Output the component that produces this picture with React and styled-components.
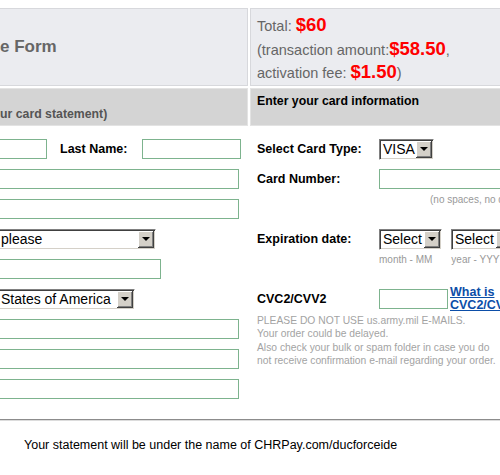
import React from "react";
import styled, { createGlobalStyle } from "styled-components";

const GlobalStyle = createGlobalStyle`
  html, body { margin: 0; padding: 0; background: #fff; overflow: hidden; }
  body { font-family: "Liberation Sans", Arial, sans-serif; }
  * { box-sizing: border-box; }
`;

const Page = styled.div`
  width: 560px;
  padding-top: 8px;
`;

const Grid = styled.div`
  display: grid;
  grid-template-columns: 248px 1fr;
  gap: 2px;
`;

const HeadCell = styled.div`
  height: 78px;
  background: #ebecf0;
  border: 1px solid #d7d8dc;
  border-left: ${(p) => (p.$cut ? "none" : "1px solid #d7d8dc")};
  display: flex;
  flex-direction: column;
  justify-content: ${(p) => (p.$top ? "flex-start" : "center")};
  padding: ${(p) => (p.$top ? "5px 6px" : "0")};
`;

const Title = styled.div`
  font-weight: bold;
  font-size: 17px;
  color: #666;
  line-height: 20px;
`;

const TotalLine = styled.div`
  font-size: 14.5px;
  color: #666;
  line-height: 21.5px;
  white-space: nowrap;
`;

const Amount = styled.span`
  color: #ff0000;
  font-weight: bold;
  font-size: 18.5px;
`;

const SubCell = styled.div`
  height: 38px;
  background: #d4d4d4;
  border: 1px solid #e3e3e3;
  border-left: ${(p) => (p.$cut ? "none" : "1px solid #e3e3e3")};
  display: flex;
  align-items: ${(p) => (p.$bottom ? "flex-end" : "flex-start")};
  padding: ${(p) => (p.$bottom ? "0 0 4px 0" : "5px 6px")};
  font-weight: bold;
  font-size: 12.3px;
  line-height: 14px;
  color: ${(p) => (p.$bottom ? "#555" : "#000")};
  white-space: nowrap;
`;

const FormGrid = styled.div`
  display: grid;
  grid-template-columns: 248px 1fr;
  column-gap: 2px;
  padding-top: 8px;
`;

const Column = styled.div`
  display: flex;
  flex-direction: column;
  padding-left: ${(p) => p.$pad || 0}px;
`;

const Row = styled.div`
  height: 30px;
  display: flex;
  align-items: center;
  flex-shrink: 0;
`;

const HintRow = styled.div`
  height: 30px;
  display: flex;
  align-items: flex-start;
  padding-left: ${(p) => p.$indent || 0}px;
`;

const Label = styled.div`
  width: ${(p) => p.$w}px;
  margin-left: ${(p) => p.$ml || 0}px;
  flex-shrink: 0;
  font-weight: bold;
  font-size: 12.5px;
  color: #000;
  white-space: nowrap;
`;

const TextInput = styled.input`
  width: ${(p) => p.$w}px;
  height: 20px;
  flex-shrink: 0;
  border: 1px solid #7db38e;
  border-left: ${(p) => (p.$cut ? "none" : "1px solid #7db38e")};
  background: #fff;
  padding: 0;
  margin: 0;
  outline: none;
`;

const SelectBox = styled.div`
  width: ${(p) => p.$w}px;
  margin-left: ${(p) => p.$ml || 0}px;
  height: 21px;
  flex-shrink: 0;
  display: flex;
  align-items: stretch;
  background: #fff;
  border-top: 1px solid #808080;
  border-left: ${(p) => (p.$cut ? "none" : "1px solid #808080")};
  border-right: 1px solid #fff;
  border-bottom: 1px solid #fff;
  box-shadow: inset 0 1px #404040, inset ${(p) => (p.$cut ? "0" : "1px")} 0 #404040,
    inset -1px -1px #d4d0c8;
  padding: 1px 1px 1px ${(p) => (p.$cut ? 0 : 1)}px;
`;

const SelectValue = styled.div`
  flex: 1;
  overflow: hidden;
  white-space: nowrap;
  font-size: 14px;
  line-height: 17px;
  color: #000;
  padding-left: ${(p) => (p.$cut ? 1 : 2)}px;
`;

const ArrowButton = styled.div`
  width: 16px;
  flex-shrink: 0;
  background: #d4d0c8;
  border-right: 1px solid #404040;
  border-bottom: 1px solid #404040;
  box-shadow: inset 1px 1px #fff, inset -1px -1px #808080;
  display: flex;
  align-items: center;
  justify-content: center;
  &::after {
    content: "";
    display: block;
    width: 0;
    height: 0;
    border-left: 4px solid transparent;
    border-right: 4px solid transparent;
    border-top: 4px solid #000;
    margin-top: 1px;
  }
`;

const Hint = styled.span`
  font-size: 10px;
  line-height: 12px;
  color: #999;
  white-space: nowrap;
  margin-left: ${(p) => p.$ml || 0}px;
`;

const HelpLink = styled.a`
  display: block;
  width: 80px;
  margin-left: 2px;
  font-weight: bold;
  font-size: 12.5px;
  line-height: 13px;
  color: #0c4ea8;
  text-decoration: underline;
  flex-shrink: 0;
`;

const Notes = styled.div`
  font-size: 10.3px;
  line-height: 13.3px;
  color: #a3a3a3;
  white-space: nowrap;
`;

const Divider = styled.div`
  margin-top: 15px;
  border-top: 1px solid #8c8c8c;
  border-bottom: 1px solid #dcdcdc;
`;

const Footer = styled.div`
  margin-top: 16px;
  padding-left: 24px;
  font-size: 12.5px;
  line-height: 16px;
  color: #000;
`;

function Select({ value, w, cut, ml }) {
  return (
    <SelectBox $w={w} $cut={cut} $ml={ml}>
      <SelectValue $cut={cut}>{value}</SelectValue>
      <ArrowButton />
    </SelectBox>
  );
}

export default function App() {
  return (
    <>
      <GlobalStyle />
      <Page>
        <Grid>
          <HeadCell $cut>
            <Title>e Form</Title>
          </HeadCell>
          <HeadCell $top>
            <TotalLine>
              Total: <Amount>$60</Amount>
            </TotalLine>
            <TotalLine>
              (transaction amount:<Amount>$58.50</Amount>,
            </TotalLine>
            <TotalLine>
              activation fee: <Amount>$1.50</Amount>)
            </TotalLine>
          </HeadCell>
          <SubCell $cut $bottom>
            ur card statement)
          </SubCell>
          <SubCell>Enter your card information</SubCell>
        </Grid>

        <FormGrid>
          <Column>
            <Row>
              <TextInput $w={47} $cut />
              <Label $w={82} $ml={13}>
                Last Name:
              </Label>
              <TextInput $w={99} />
            </Row>
            <Row>
              <TextInput $w={239} $cut />
            </Row>
            <Row>
              <TextInput $w={239} $cut />
            </Row>
            <Row>
              <Select value="please" w={156} cut />
            </Row>
            <Row>
              <TextInput $w={161} $cut />
            </Row>
            <Row>
              <Select value="States of America" w={135} cut />
            </Row>
            <Row>
              <TextInput $w={239} $cut />
            </Row>
            <Row>
              <TextInput $w={239} $cut />
            </Row>
            <Row>
              <TextInput $w={239} $cut />
            </Row>
          </Column>

          <Column $pad={7}>
            <Row>
              <Label $w={122}>Select Card Type:</Label>
              <Select value="VISA" w={55} />
            </Row>
            <Row>
              <Label $w={122}>Card Number:</Label>
              <TextInput $w={200} />
            </Row>
            <HintRow $indent={173}>
              <Hint>(no spaces, no dashes)</Hint>
            </HintRow>
            <Row>
              <Label $w={122}>Expiration date:</Label>
              <Select value="Select" w={63} />
              <Select value="Select" w={63} ml={9} />
            </Row>
            <HintRow $indent={122}>
              <Hint>month - MM</Hint>
              <Hint $ml={19}>year - YYYY</Hint>
            </HintRow>
            <Row>
              <Label $w={122}>CVC2/CVV2</Label>
              <TextInput $w={69} />
              <HelpLink href="#">What is CVC2/CVV2?</HelpLink>
            </Row>
            <Notes>
              PLEASE DO NOT USE us.army.mil E-MAILS.
              <br />
              Your order could be delayed.
              <br />
              Also check your bulk or spam folder in case you do
              <br />
              not receive confirmation e-mail regarding your order.
            </Notes>
          </Column>
        </FormGrid>

        <Divider />
        <Footer>Your statement will be under the name of CHRPay.com/ducforceide</Footer>
      </Page>
    </>
  );
}
